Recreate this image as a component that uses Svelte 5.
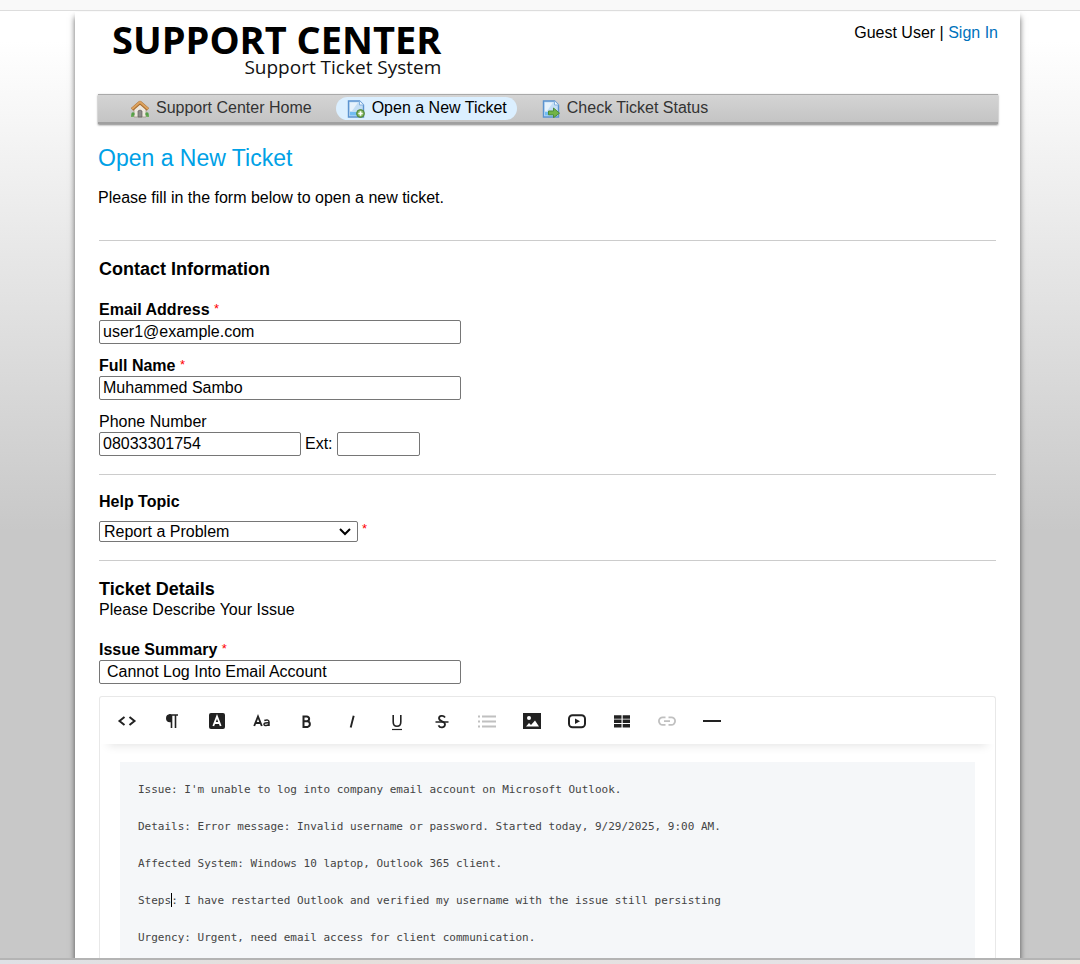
<script>
  let email = $state('user1@example.com');
  let name = $state('Muhammed Sambo');
  let phone = $state('08033301754');
  let ext = $state('');
  let topic = $state('Report a Problem');
  let summary = $state('Cannot Log Into Email Account');

  const before = [
    "Issue: I'm unable to log into company email account on Microsoft Outlook.",
    'Details: Error message: Invalid username or password. Started today, 9/29/2025, 9:00 AM.',
    'Affected System: Windows 10 laptop, Outlook 365 client.'
  ];
  const tools = [
    'HTML', 'Format', 'Text colour', 'Font', 'Bold', 'Italic', 'Underline',
    'Strikethrough', 'List', 'Image', 'Video', 'Table', 'Link', 'Line'
  ];
  const muted = ['List', 'Link'];
</script>

{#snippet sheet()}
  <path d="M1.5 1h11l4 4v12h-15z" fill="#c3def5" stroke="#5b93cf" stroke-width="1.4" />
  <path d="M3 2.500h8L5 11H3z" fill="#e6f2fc" />
  <path d="M3 12h12v3.500H3z" fill="#72bdf2" />
  <path d="M12.500 1v4h4" fill="#f3f9ff" stroke="#85b2df" />
{/snippet}

<div class="page">
  <div class="topbar"></div>
  <div class="backdrop">
    <main class="sheet">
      <header>
        <a class="logo" href="#home">
          <span class="logo-title">SUPPORT CENTER</span>
          <span class="logo-sub">Support Ticket System</span>
        </a>
        <p class="user">Guest User | <a href="#signin">Sign In</a></p>
      </header>

      <nav>
        <a href="#home">
          <svg width="18" height="18" viewBox="0 0 18 18" aria-hidden="true">
            <path d="M0 14.500h18V17H0z" fill="#6fae5c" />
            <path d="M3 8l6-5 6 5v9H3z" fill="#eee9df" stroke="#a39a8d" stroke-width=".8" />
            <path d="M7 17v-6q2-2 4 0v6z" fill="#8f8d8b" stroke="#66625e" stroke-width=".7" />
            <path d="M1 9.500L9 2.500l8 7" fill="none" stroke="#a76c30" stroke-width="3.600" stroke-linejoin="round" />
            <path d="M1 9L9 2 17 9" fill="none" stroke="#dda35f" stroke-width="2" />
            <circle cx="2" cy="14" r="1.700" fill="#55a047" /><circle cx="16" cy="14" r="1.700" fill="#55a047" />
          </svg>
          Support Center Home
        </a>
        <a href="#new" class="active">
          <svg width="18" height="18" viewBox="0 0 18 18" aria-hidden="true">
            {@render sheet()}
            <circle cx="13.500" cy="13.500" r="3.900" fill="#7fb35a" stroke="#4b8337" />
            <path d="M13.500 11.300v4.400M11.300 13.500h4.400" stroke="#fff" stroke-width="1.700" />
          </svg>
          Open a New Ticket
        </a>
        <a href="#status">
          <svg width="18" height="18" viewBox="0 0 18 18" aria-hidden="true">
            {@render sheet()}
            <path d="M6.500 11h5V8l6 5.200-6 4.500v-2.900h-5z" fill="#72b445" stroke="#4d8c37" />
          </svg>
          Check Ticket Status
        </a>
      </nav>

      <h1>Open a New Ticket</h1>
      <p class="intro">Please fill in the form below to open a new ticket.</p>

      <form>
        <hr />
        <h2>Contact Information</h2>
        <div class="field first">
          <label for="email"><b>Email Address</b> <span class="req">*</span></label>
          <input id="email" class="wide" type="email" bind:value={email} />
        </div>
        <div class="field">
          <label for="name"><b>Full Name</b> <span class="req">*</span></label>
          <input id="name" class="wide" type="text" bind:value={name} />
        </div>
        <div class="field">
          <label for="phone">Phone Number</label>
          <div class="row">
            <input id="phone" class="phone" type="tel" bind:value={phone} />
            <label for="ext">Ext:</label>
            <input id="ext" class="ext" type="text" bind:value={ext} />
          </div>
        </div>

        <hr />
        <label class="topic-label" for="topic"><b>Help Topic</b></label>
        <div class="row topic">
          <select id="topic" bind:value={topic}>
            <option>Report a Problem</option>
          </select>
          <span class="req">*</span>
        </div>

        <hr />
        <h2>Ticket Details</h2>
        <p>Please Describe Your Issue</p>
        <div class="field first">
          <label for="summary"><b>Issue Summary</b> <span class="req">*</span></label>
          <input id="summary" class="wide summary" type="text" bind:value={summary} />
        </div>

        <div class="editor">
          <div class="toolbar" role="toolbar" aria-label="Formatting">
            {#each tools as tool}
              <button type="button" aria-label={tool} class:muted={muted.includes(tool)}>
                <svg width="20" height="20" viewBox="0 0 20 20" fill="none" stroke="currentColor" stroke-width="2" aria-hidden="true">
                  {#if tool === 'HTML'}
                    <path d="M7.500 6L2.500 10l5 4M12.500 6l5 4-5 4" />
                  {:else if tool === 'Format'}
                    <path d="M9 3.200H8a4 4 0 0 0 0 8h1z" fill="currentColor" stroke="none" />
                    <path d="M7 4h9M9.500 4v13M13.500 4v13" stroke-width="1.600" />
                  {:else if tool === 'Text colour'}
                    <rect x="2" y="2" width="16" height="16" rx="2" fill="currentColor" stroke="none" />
                    <path d="M6.300 15L10 5.500l3.700 9.500M7.500 12h5" stroke="#fff" stroke-width="1.800" />
                  {:else if tool === 'Font'}
                    <path d="M2.200 15L6 5.500 9.800 15M3.500 12h5" stroke-width="1.900" />
                    <path d="M12.300 9.500q4.700-1.500 4.700 1.500v4M17 11.700q-5-.2-5 1.600c0 1.800 4 1.700 5-.4" stroke-width="1.500" />
                  {:else if tool === 'Bold'}
                    <path d="M6.500 5.500h3.300a2.300 2.300 0 0 1 0 4.700H6.500zM6.500 10.200h4a2.900 2.900 0 0 1 0 5.700h-4z" />
                  {:else if tool === 'Italic'}
                    <path d="M11.700 4.700L8.700 16.500" stroke-width="1.900" />
                  {:else if tool === 'Underline'}
                    <path d="M6.200 4V11q0 4.300 3.800 4.300t3.800-4.300V4" stroke-width="1.600" />
                    <path d="M5 18.500h10" stroke-width="1.200" />
                  {:else if tool === 'Strikethrough'}
                    <path d="M13 6.500C11.500 4 7 4.500 7 7.300c0 3.500 6 2.500 6 6 0 3.500-5 4.200-6.500 1" stroke-width="1.800" />
                    <path d="M3.500 11h13" stroke-width="1.500" />
                  {:else if tool === 'List'}
                    <path d="M1 5.500h2M5 5.500h14M1 10.500h2M5 10.500h14M1 15.500h2M5 15.500h14" />
                  {:else if tool === 'Image'}
                    <path d="M1 2h18v16H1z" fill="currentColor" stroke="none" />
                    <circle cx="7" cy="7" r="2" fill="#fff" stroke="none" />
                    <path d="M4 15.500L7 12l2 2 4-4.500 4 6z" fill="#fff" stroke="none" />
                  {:else if tool === 'Video'}
                    <rect x="2" y="4.200" width="16" height="12" rx="3.500" />
                    <path d="M8 7.500l5 2.800-5 2.800z" fill="currentColor" stroke="none" />
                  {:else if tool === 'Table'}
                    <path d="M2 6h7.500M10.700 6H18M2 10.300h7.500M10.700 10.300H18M2 14.700h7.500M10.700 14.700H18" stroke-width="3.400" />
                  {:else if tool === 'Link'}
                    <path d="M8.500 6.300H5.700a3.800 3.800 0 0 0 0 7.600h2.800M11.500 6.300h2.800a3.800 3.800 0 0 1 0 7.600h-2.800M7 10.100h6" stroke-width="1.800" />
                  {:else}
                    <path d="M1 10h18" />
                  {/if}
                </svg>
              </button>
            {/each}
          </div>
          <div class="message" role="textbox" aria-label="Message" aria-multiline="true" tabindex="0" contenteditable="true">
            {#each before as line}
              <p>{line}</p>
            {/each}
            <p>Steps<span class="caret"></span>: I have restarted Outlook and verified my username with the issue still persisting</p>
            <p>Urgency: Urgent, need email access for client communication.</p>
          </div>
        </div>
      </form>
    </main>
  </div>
  <div class="strip"></div>
</div>

<style>
  :global(body) { margin: 0; }
  .page {
    height: 100vh;
    display: flex;
    flex-direction: column;
    overflow: hidden;
    color: #000;
    font: 16px/20px "Liberation Sans", Arial, sans-serif;
  }
  .page * { box-sizing: border-box; }
  p, h1, h2 { margin: 0; }
  a { text-decoration: none; }
  .topbar { flex: none; height: 11px; background: #f9f9f9; border-bottom: 1px solid #ddd; }
  .backdrop {
    flex: 1;
    min-height: 0;
    display: flex;
    padding: 1px 60px 0 75px;
    overflow: hidden;
    background: #c8c8c8 linear-gradient(#fff, #fff 30px, #c8c8c8 520px) no-repeat;
  }
  .strip {
    flex: none;
    height: 6px;
    border-top: 2px solid #b4b4b4;
    background: linear-gradient(90deg, #dfe1e6, #e5dfdb 30%, #e4e3e8 85%, #ece6df);
  }
  .sheet {
    flex: 1;
    min-width: 0;
    display: flex;
    flex-direction: column;
    padding: 0 22px 0 23px;
    background: #fff;
    box-shadow: 0 5px 6px rgba(0, 0, 0, 0.6);
  }
  header { display: flex; justify-content: space-between; height: 82px; }
  .logo {
    display: flex;
    flex-direction: column;
    align-items: flex-end;
    padding: 9px 0 0 14px;
    color: #000;
    font-family: "Open Sans", sans-serif;
  }
  .logo-title { font-size: 38px; font-weight: 700; line-height: 36px; }
  .logo-sub { font-size: 19px; line-height: 20px; color: #111; }
  .user { padding-top: 11px; }
  .user a { color: #0072bc; }
  nav {
    flex: none;
    display: flex;
    gap: 14px;
    height: 30px;
    padding: 2px 22px;
    border-top: 1px solid #aaa;
    background: linear-gradient(#d4d4d4, #c3c3c3);
    box-shadow: inset 0 -2px 0 #a0a0a0, 0 1px 2px rgba(0, 0, 0, 0.5);
  }
  nav a {
    display: flex;
    align-items: center;
    gap: 7px;
    height: 23px;
    padding: 0 10px 2px 11px;
    border-radius: 12px;
    color: #333;
    white-space: nowrap;
  }
  nav svg { margin-top: 2px; }
  nav .active { background: #dbefff; color: #000; }
  h1 { margin-top: 20px; font-size: 23px; font-weight: 400; line-height: 28px; color: #00a1e6; }
  .intro { margin-top: 16px; }
  form { flex: 1; display: flex; flex-direction: column; padding: 0 2px 0 1px; margin-top: 32px; }
  hr { width: 100%; height: 1px; margin: 0; border: 0; background: #ccc; }
  h2 { margin-top: 17px; font-size: 18px; line-height: 22px; }
  .field { display: flex; flex-direction: column; align-items: flex-start; margin-top: 12px; }
  .first { margin-top: 20px; }
  .req { color: #f00; font-size: 13px; line-height: 16px; vertical-align: 2px; }
  .row { display: flex; align-items: center; gap: 4px; }
  input, select { margin: 0; border: 1px solid #767676; border-radius: 2px; background: #fff; color: #000; font: inherit; }
  input { height: 24px; padding: 0 3px; }
  .wide { width: 362px; max-width: 100%; }
  .summary { padding-left: 7px; }
  .phone { width: 202px; }
  .ext { width: 83px; }
  form > hr:not(:first-child) { margin-top: 18px; }
  .topic-label { margin-top: 17px; }
  .topic { align-items: flex-start; margin-top: 9px; }
  select {
    width: 259px;
    height: 21px;
    padding: 0 20px 0 4px;
    appearance: none;
    line-height: 19px;
    background: #fff url("data:image/svg+xml,%3Csvg xmlns='http://www.w3.org/2000/svg' width='12' height='8'%3E%3Cpath d='M1 1l5 5 5-5' fill='none' stroke='%23000' stroke-width='2'/%3E%3C/svg%3E") no-repeat right 6px center;
  }
  .editor {
    flex: 1;
    display: flex;
    flex-direction: column;
    margin-top: 12px;
    border: 1px solid #e8e8e8;
    border-bottom: 0;
    border-radius: 3px 3px 0 0;
  }
  .toolbar { display: flex; height: 47px; padding-left: 4px; box-shadow: 0 10px 10px -8px rgba(0, 0, 0, 0.1); }
  button {
    display: flex;
    align-items: center;
    justify-content: center;
    width: 45px;
    padding: 0;
    border: 0;
    background: none;
    color: #222;
  }
  .muted { color: #c0c0c0; }
  .message {
    flex: 1;
    display: flex;
    flex-direction: column;
    gap: 17px;
    margin: 18px 20px 0;
    padding: 18px 18px 0;
    background: #f5f7f9;
    color: #444;
    font: 11px/20px "DejaVu Sans Mono", monospace;
    outline: 0;
  }
  .caret { display: inline-block; width: 1px; height: 14px; margin-right: -1px; background: #000; vertical-align: -3px; }
</style>
